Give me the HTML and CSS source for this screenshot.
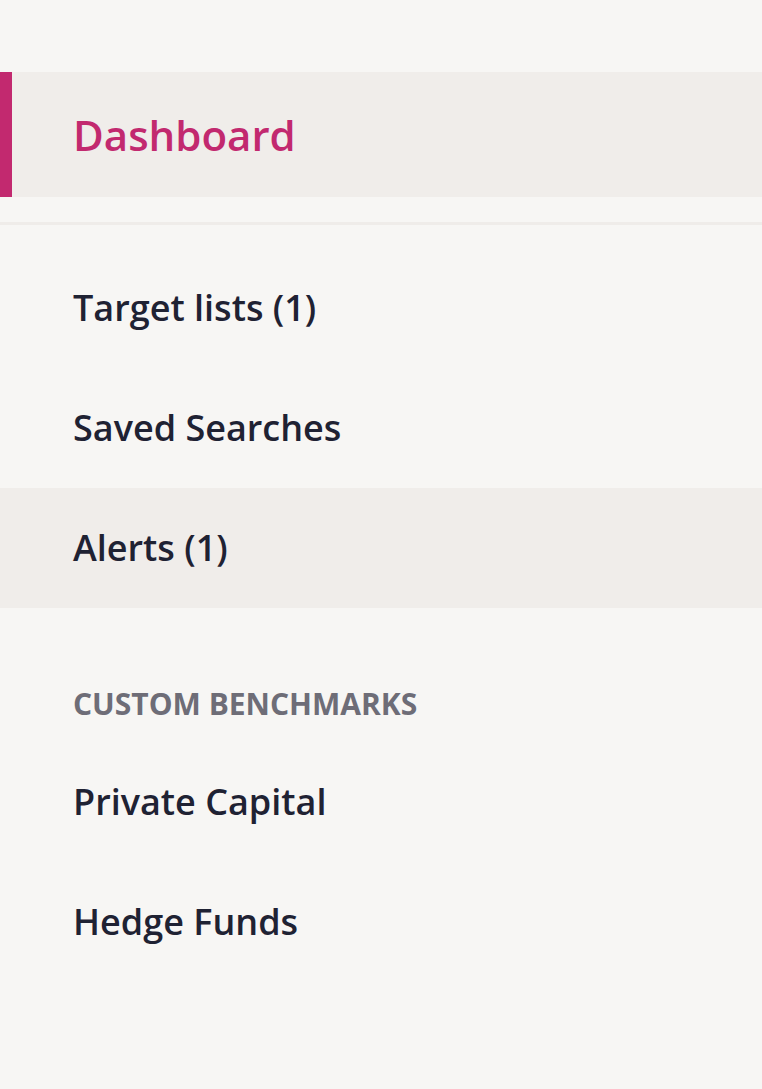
FILE: index.html
```html
<!DOCTYPE html>
<html>
<head>
<meta charset="utf-8">
<link rel="stylesheet" href="styles.css">
</head>
<body>
<nav class="sidebar">
  <a class="item item-active">Dashboard</a>
  <div class="divider"></div>
  <a class="item">Target lists (1)</a>
  <a class="item">Saved Searches</a>
  <a class="item item-hover">Alerts (1)</a>
  <div class="section-title">CUSTOM BENCHMARKS</div>
  <a class="item">Private Capital</a>
  <a class="item">Hedge Funds</a>
</nav>
</body>
</html>
```
FILE: styles.css
```css
html, body {
  margin: 0;
  padding: 0;
  background: #f7f6f4;
}
body {
  font-family: "Open Sans", "Liberation Sans", sans-serif;
  width: 762px;
  height: 1089px;
  overflow: hidden;
}
.sidebar {
  display: flex;
  flex-direction: column;
  padding-top: 72px;
}
.item {
  display: block;
  height: 120px;
  line-height: 120px;
  padding-left: 73px;
  font-size: 36px;
  font-weight: 600;
  color: #1f2233;
  white-space: nowrap;
}
.item-active {
  height: 125px;
  line-height: 125px;
  background: #f0edea;
  color: #c2296f;
  border-left: 12px solid #c2296f;
  padding-left: 61px;
  font-size: 42px;
}
.item-hover {
  background: #f0edea;
}
.divider {
  height: 3px;
  background: #efece9;
  margin-top: 25px;
  margin-bottom: 23px;
}
.section-title {
  padding-left: 73px;
  margin-top: 65px;
  height: 69px;
  line-height: 62px;
  font-size: 30px;
  font-weight: 700;
  color: #6e6d77;
}
```
